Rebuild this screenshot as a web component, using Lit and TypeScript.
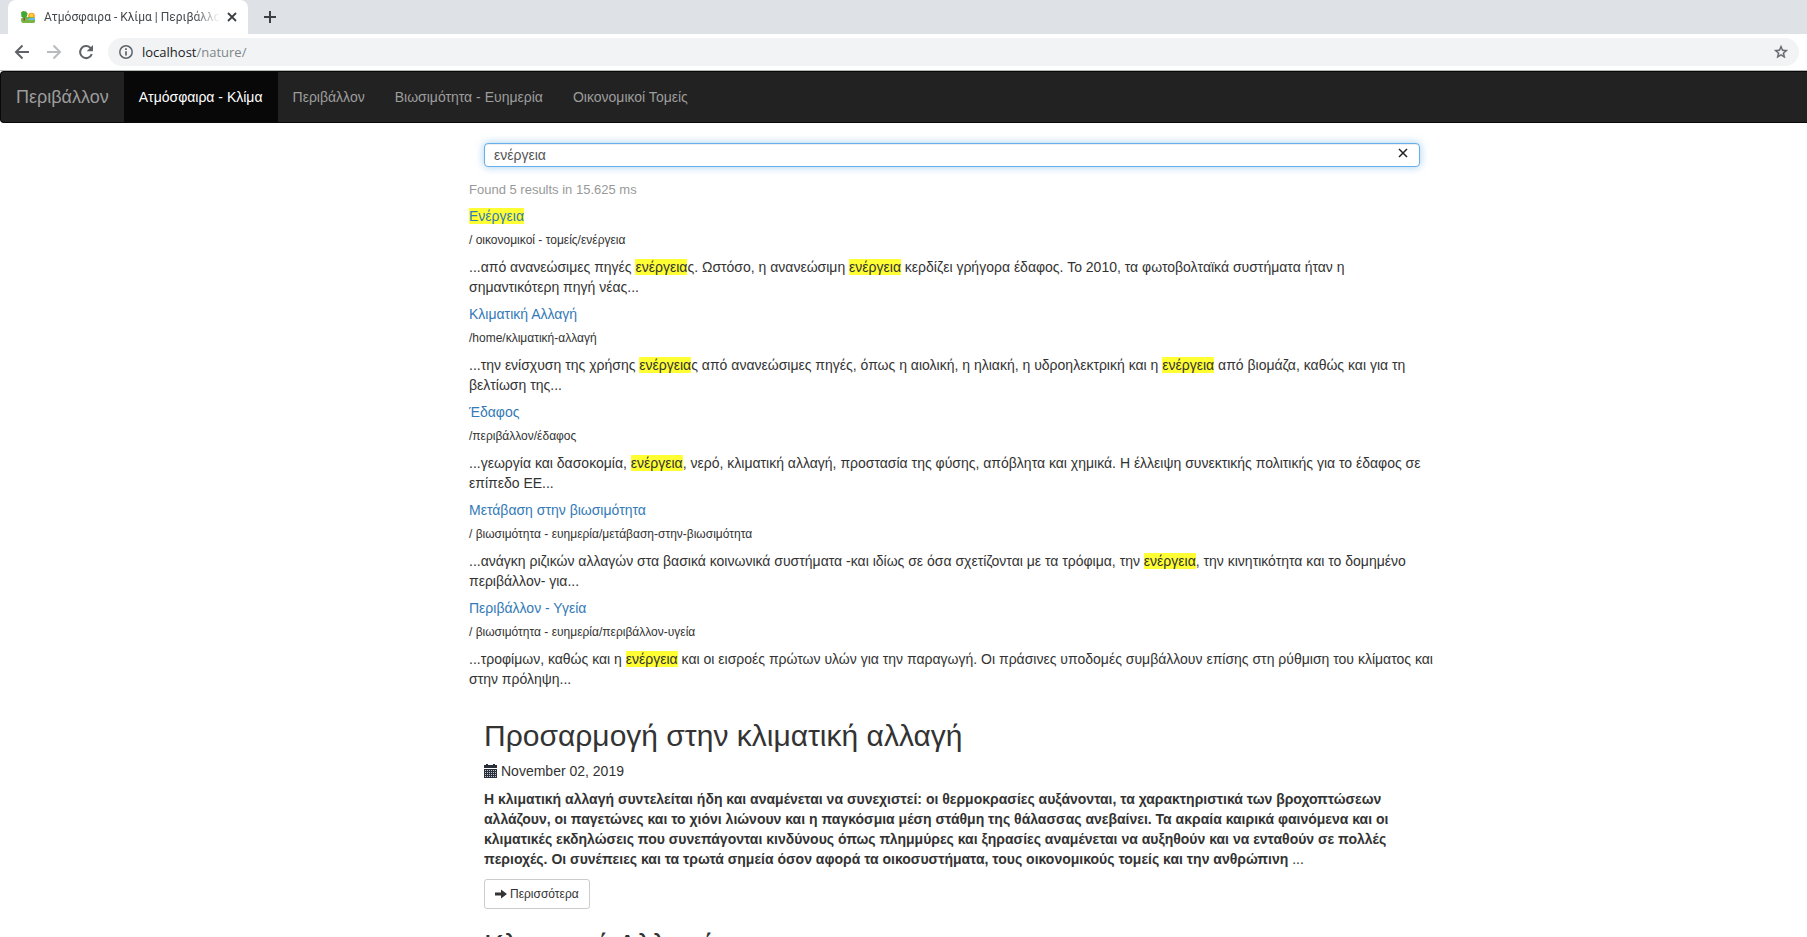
import { LitElement, html, css, svg } from "lit";
import { customElement, property } from "lit/decorators.js";

interface Result {
  title: string;
  path: string;
  snippet: string;
}

const TERM = "ενέργεια";

const RESULTS: Result[] = [
  {
    title: "Ενέργεια",
    path: "/ οικονομικοί - τομείς/ενέργεια",
    snippet:
      "...από ανανεώσιμες πηγές ενέργειας. Ωστόσο, η ανανεώσιμη ενέργεια κερδίζει γρήγορα έδαφος. Το 2010, τα φωτοβολταϊκά συστήματα ήταν η σημαντικότερη πηγή νέας...",
  },
  {
    title: "Κλιματική Αλλαγή",
    path: "/home/κλιματική-αλλαγή",
    snippet:
      "...την ενίσχυση της χρήσης ενέργειας από ανανεώσιμες πηγές, όπως η αιολική, η ηλιακή, η υδροηλεκτρική και η ενέργεια από βιομάζα, καθώς και για τη βελτίωση της...",
  },
  {
    title: "Έδαφος",
    path: "/περιβάλλον/έδαφος",
    snippet:
      "...γεωργία και δασοκομία, ενέργεια, νερό, κλιματική αλλαγή, προστασία της φύσης, απόβλητα και χημικά. Η έλλειψη συνεκτικής πολιτικής για το έδαφος σε επίπεδο ΕΕ...",
  },
  {
    title: "Μετάβαση στην βιωσιμότητα",
    path: "/ βιωσιμότητα - ευημερία/μετάβαση-στην-βιωσιμότητα",
    snippet:
      "...ανάγκη ριζικών αλλαγών στα βασικά κοινωνικά συστήματα -και ιδίως σε όσα σχετίζονται με τα τρόφιμα, την ενέργεια, την κινητικότητα και το δομημένο περιβάλλον- για...",
  },
  {
    title: "Περιβάλλον - Υγεία",
    path: "/ βιωσιμότητα - ευημερία/περιβάλλον-υγεία",
    snippet:
      "...τροφίμων, καθώς και η ενέργεια και οι εισροές πρώτων υλών για την παραγωγή. Οι πράσινες υποδομές συμβάλλουν επίσης στη ρύθμιση του κλίματος και στην πρόληψη...",
  },
];

const NAV = ["Ατμόσφαιρα - Κλίμα", "Περιβάλλον", "Βιωσιμότητα - Ευημερία", "Οικονομικοί Τομείς"];

/** Wraps every occurrence of the search term in <mark>. */
function highlight(text: string) {
  return text
    .split(new RegExp(`(${TERM})`, "i"))
    .map((part) => (part.toLowerCase() === TERM ? html`<mark>${part}</mark>` : part));
}

const reset = css`
  :host {
    display: block;
    box-sizing: border-box;
  }
  *,
  *::before,
  *::after {
    box-sizing: border-box;
  }
  button {
    font: inherit;
    border: 0;
    padding: 0;
    background: none;
    color: inherit;
  }
  svg {
    display: block;
    flex: none;
  }
  a {
    text-decoration: none;
  }
`;

@customElement("browser-bar")
class BrowserBar extends LitElement {
  static styles = [
    reset,
    css`
      :host {
        font-family: "Open Sans", "Noto Sans", sans-serif;
        color: #5f6368;
        border-bottom: 1px solid #b3b7b5;
      }
      .strip {
        display: flex;
        align-items: center;
        height: 34px;
        padding-left: 8px;
        background: #dee1e6;
      }
      .tab {
        display: flex;
        align-items: center;
        width: 240px;
        height: 34px;
        padding: 0 10px 0 12px;
        background: #fff;
        border-radius: 8px 8px 0 0;
      }
      .tab-title {
        flex: 1;
        min-width: 0;
        margin: 0 6px 0 8px;
        overflow: hidden;
        white-space: nowrap;
        font-family: Roboto, "Open Sans", sans-serif;
        font-size: 12px;
        line-height: 16px;
        color: #45494d;
        mask-image: linear-gradient(to right, #000 85%, transparent);
      }
      .new-tab {
        margin-left: 16px;
        color: #3c4043;
      }
      .toolbar {
        display: flex;
        align-items: center;
        gap: 16px;
        height: 36px;
        padding: 0 8px 0 14px;
        background: #fff;
      }
      .address {
        flex: 1;
        display: flex;
        align-items: center;
        gap: 8px;
        height: 28px;
        margin-left: -2px;
        padding: 0 10px;
        border-radius: 14px;
        background: #f1f3f4;
      }
      .url {
        flex: 1;
        font-size: 13px;
        line-height: 20px;
        color: #80868b;
      }
      .host {
        color: #202124;
      }
      .off {
        color: #b9bbbe;
      }
    `,
  ];

  render() {
    return html`
      <div class="strip">
        <div class="tab">
          <svg width="16" height="16" viewBox="0 0 16 16">
            <circle cx="11.500" cy="7" r="3.300" fill="#ff9326" />
            <circle cx="11.500" cy="6.500" r="1.900" fill="#ffd23c" />
            <path d="M1 9.500c4-2.500 10-1 14-1v4c0 1-1 1.500-2 1.500H3c-1.500 0-2-1.500-2-4.500z" fill="#7cb342" />
            <path d="M7 10.500c3-1.800 6-1.500 8-1.500v2c-3 0-5 .5-8-.5z" fill="#5cc0ea" />
            <path d="M3.500 8H5v3.500H3.500z" fill="#795548" />
            <path d="M1 3.500L3 2l3 .5 1.500 2L7 7.500 4.500 9 1.500 8z" fill="#43a832" />
          </svg>
          <span class="tab-title">Ατμόσφαιρα - Κλίμα | Περιβάλλον</span>
          <button aria-label="Close tab">
            <svg width="12" height="12" viewBox="0 0 12 12">
              <path d="M2 2l8 8M10 2l-8 8" stroke="#3c4043" stroke-width="1.800" />
            </svg>
          </button>
        </div>
        <button class="new-tab" aria-label="New tab">
          <svg width="12" height="12" viewBox="0 0 12 12">
            <path d="M6 0v12M0 6h12" stroke="currentColor" stroke-width="2" />
          </svg>
        </button>
      </div>
      <div class="toolbar">
        <button aria-label="Back">
          <svg width="16" height="16" viewBox="0 0 16 16">
            <path d="M15 8H2.500M8.500 1.500L2 8l6.500 6.500" fill="none" stroke="currentColor" stroke-width="2" />
          </svg>
        </button>
        <button class="off" aria-label="Forward">
          <svg width="16" height="16" viewBox="0 0 16 16">
            <path d="M1 8h12.500M7.500 1.500L14 8l-6.500 6.500" fill="none" stroke="currentColor" stroke-width="2" />
          </svg>
        </button>
        <button aria-label="Reload">
          <svg width="16" height="16" viewBox="0 0 16 16">
            <path d="M13.800 10A6 6 0 1 1 12.300 3.800L14 5.500" fill="none" stroke="currentColor" stroke-width="2" />
            <path d="M15 1v6.300H8.700z" fill="currentColor" />
          </svg>
        </button>
        <div class="address">
          <svg width="16" height="16" viewBox="0 0 16 16">
            <circle cx="8" cy="8" r="6.200" fill="none" stroke="currentColor" stroke-width="1.500" />
            <path d="M8 7.200v4.300M8 4.300v1.700" stroke="currentColor" stroke-width="1.700" />
          </svg>
          <span class="url"><span class="host">localhost</span>/nature/</span>
          <button aria-label="Bookmark">
            <svg width="16" height="16" viewBox="0 0 24 24">
              <path
                d="M22 9.240l-7.190-.62L12 2 9.190 8.630 2 9.240l5.460 4.730L5.820 21 12 17.270 18.180 21l-1.630-7.030L22 9.240zM12 15.400l-3.760 2.270 1-4.280-3.320-2.880 4.380-.38L12 6.100l1.710 4.040 4.380.38-3.320 2.880 1 4.280L12 15.400z"
                fill="currentColor"
                stroke="currentColor"
                stroke-width="0.600"
              />
            </svg>
          </button>
        </div>
      </div>
    `;
  }
}

@customElement("site-nav")
class SiteNav extends LitElement {
  static styles = [
    reset,
    css`
      nav {
        display: flex;
        border: 1px solid #080808;
        border-right: 0;
        border-radius: 4px 0 0 4px;
        background: #222;
      }
      a {
        padding: 15px;
        font-size: 14px;
        line-height: 20px;
        color: #9d9d9d;
      }
      .brand {
        font-size: 18px;
      }
      .active {
        color: #fff;
        background: #080808;
      }
    `,
  ];

  render() {
    return html`
      <nav>
        <a class="brand" href="#">Περιβάλλον</a>
        ${NAV.map((label, i) => html`<a class=${i === 0 ? "active" : "item"} href="#">${label}</a>`)}
      </nav>
    `;
  }
}

@customElement("search-panel")
class SearchPanel extends LitElement {
  static styles = [
    reset,
    css`
      .box {
        position: relative;
        margin: 0 15px 13px;
      }
      input {
        display: block;
        width: 100%;
        height: 24px;
        padding: 0 9px;
        border: 1px solid #66afe9;
        border-radius: 4px;
        outline: 0;
        font: inherit;
        color: #555;
        background: #fff;
        box-shadow: inset 0 1px 1px rgba(0, 0, 0, 0.075), 0 0 8px rgba(102, 175, 233, 0.6);
      }
      .clear {
        position: absolute;
        top: 4px;
        right: 11px;
      }
      .count {
        margin: 0;
        font-size: 13px;
        color: #999;
      }
      .results {
        display: grid;
        gap: 7px;
        margin-top: 6px;
      }
      .result a {
        color: #337ab7;
      }
      .path {
        margin: 4px 0 7px;
        font-size: 12px;
      }
      .snippet {
        margin: 0;
      }
      mark {
        color: inherit;
        background: #ff3;
      }
    `,
  ];

  render() {
    return html`
      <div class="box">
        <input type="text" aria-label="Αναζήτηση" .value=${TERM} />
        <button class="clear" aria-label="Καθαρισμός">
          <svg width="12" height="12" viewBox="0 0 12 12">
            <path d="M2 2l8 8M10 2l-8 8" stroke="#222" stroke-width="1.500" />
          </svg>
        </button>
      </div>
      <p class="count">Found ${RESULTS.length} results in 15.625 ms</p>
      <div class="results">
        ${RESULTS.map(
          (r) => html`
            <div class="result">
              <a href="#">${highlight(r.title)}</a>
              <p class="path">${r.path}</p>
              <p class="snippet">${highlight(r.snippet)}</p>
            </div>
          `
        )}
      </div>
    `;
  }
}

@customElement("article-teaser")
class ArticleTeaser extends LitElement {
  @property() heading = "";
  @property() date = "";
  @property() lead = "";

  static styles = [
    reset,
    css`
      article {
        padding: 0 15px;
      }
      h2 {
        margin: 0 0 9px;
        font-size: 30px;
        font-weight: 400;
        line-height: 33px;
      }
      .date {
        display: flex;
        align-items: center;
        gap: 4px;
        margin: 0 0 8px;
      }
      .lead {
        margin: 0 0 10px;
      }
      .more {
        display: inline-flex;
        align-items: center;
        gap: 3px;
        height: 30px;
        padding: 0 10px;
        border: 1px solid #ccc;
        border-radius: 3px;
        font-size: 12px;
        color: #333;
      }
    `,
  ];

  render() {
    return html`
      <article>
        <h2>${this.heading}</h2>
        <p class="date">
          <svg width="13" height="14" viewBox="0 0 13 14">
            <path d="M0 1h2V0h2v1h5V0h2v1h2v3H0zM0 5h13v9H0z" fill="#2b3038" />
            ${[6, 8, 10, 12].map((y) =>
              [1, 3, 5, 7, 9, 11].map(
                (x) => svg`<rect x=${x} y=${y} width="1" height="1" fill="#b9c6dc" />`
              )
            )}
          </svg>
          <span>${this.date}</span>
        </p>
        <p class="lead"><strong>${this.lead}</strong> ...</p>
        <a class="more" href="#">
          <svg width="12" height="10" viewBox="0 0 12 10">
            <path d="M0 3.500h6V0.500L12 5 6 9.500v-3H0z" fill="#333" />
          </svg>
          <span>Περισσότερα</span>
        </a>
      </article>
    `;
  }
}

@customElement("app-root")
class AppRoot extends LitElement {
  static styles = [
    reset,
    css`
      :host {
        height: 100vh;
        overflow: hidden;
        font: 14px/20px "Liberation Sans", Arial, sans-serif;
        color: #333;
        background: #fff;
      }
      .page {
        display: grid;
        grid-template-columns: 469fr 966fr 372fr;
        padding-top: 20px;
      }
      main {
        grid-column: 2;
        min-width: 0;
      }
      .articles {
        display: grid;
        gap: 19px;
        margin-top: 30px;
      }
    `,
  ];

  render() {
    return html`
      <browser-bar></browser-bar>
      <site-nav></site-nav>
      <div class="page">
        <main>
          <search-panel></search-panel>
          <div class="articles">
            <article-teaser
              heading="Προσαρμογή στην κλιματική αλλαγή"
              date="November 02, 2019"
              lead="Η κλιματική αλλαγή συντελείται ήδη και αναμένεται να συνεχιστεί: οι θερμοκρασίες αυξάνονται, τα χαρακτηριστικά των βροχοπτώσεων αλλάζουν, οι παγετώνες και το χιόνι λιώνουν και η παγκόσμια μέση στάθμη της θάλασσας ανεβαίνει. Τα ακραία καιρικά φαινόμενα και οι κλιματικές εκδηλώσεις που συνεπάγονται κινδύνους όπως πλημμύρες και ξηρασίες αναμένεται να αυξηθούν και να ενταθούν σε πολλές περιοχές. Οι συνέπειες και τα τρωτά σημεία όσον αφορά τα οικοσυστήματα, τους οικονομικούς τομείς και την ανθρώπινη"
            ></article-teaser>
            <article-teaser heading="Κλιματική Αλλαγή"></article-teaser>
          </div>
        </main>
      </div>
    `;
  }
}
